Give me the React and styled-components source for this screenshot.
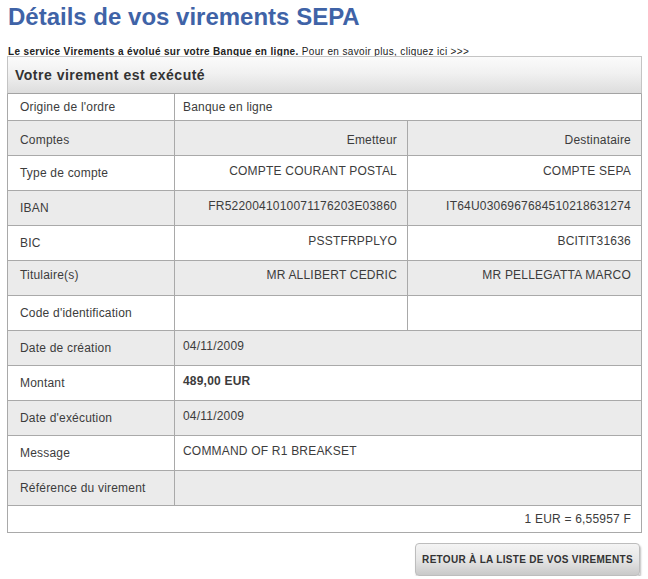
import React from "react";
import styled, { createGlobalStyle } from "styled-components";

const Global = createGlobalStyle`
  html, body { margin: 0; padding: 0; background: #ffffff; }
  body { font-family: "Liberation Sans", Arial, sans-serif; color: #3a3a3a; }
`;

const Page = styled.div`
  width: 648px;
  padding: 0 0 0 7px;
  box-sizing: border-box;
`;

const Title = styled.h1`
  margin: 0;
  padding: 3px 0 0 1px;
  height: 34px;
  box-sizing: border-box;
  font-family: "Liberation Sans", Arial, sans-serif;
  font-size: 24px;
  line-height: 28px;
  font-weight: bold;
  color: #3f63a7;
`;

const Notice = styled.div`
  margin-top: 11px;
  padding-left: 1px;
  height: 11px;
  overflow: hidden;
  font-family: "Liberation Sans", Arial, sans-serif;
  font-size: 10px;
  line-height: 13px;
  letter-spacing: 0.35px;
  color: #222;
  white-space: nowrap;
`;

const NoticeStrong = styled.strong`
  font-weight: bold;
`;

const Panel = styled.div`
  width: 635px;
  box-sizing: border-box;
  border-left: 1px solid #a9a9a9;
  border-right: 1px solid #a9a9a9;
  border-bottom: 1px solid #a9a9a9;
`;

const PanelHeader = styled.div`
  height: 38px;
  box-sizing: border-box;
  margin: 0 -1px;
  border: 1px solid #c4c4c4;
  border-bottom: 1px solid #a3a3a3;
  background: linear-gradient(to bottom, #fbfbfb 0%, #f1f1f1 45%, #dddddd 100%);
  display: flex;
  align-items: center;
  padding-left: 7px;
  font-size: 14px;
  letter-spacing: 0.5px;
  font-weight: bold;
  color: #333;
`;

const Row = styled.div`
  display: grid;
  grid-template-columns: 166px 233px 1fr;
  height: ${(p) => p.$h || 35}px;
  box-sizing: border-box;
  border-bottom: 1px solid #a9a9a9;
  background: ${(p) => (p.$alt ? "#ebebeb" : "#ffffff")};
`;

const Cell = styled.div`
  box-sizing: border-box;
  font-size: 12px;
  line-height: 14px;
  letter-spacing: 0.2px;
  color: #3c3c3c;
  display: flex;
  align-items: ${(p) => (p.$top !== undefined ? "flex-start" : "center")};
  padding-top: ${(p) => (p.$top !== undefined ? p.$top : 0)}px;
  justify-content: ${(p) => (p.$right ? "flex-end" : "flex-start")};
  padding-left: ${(p) => (p.$right ? 0 : p.$label ? 12 : 8)}px;
  padding-right: ${(p) => (p.$right ? 10 : 0)}px;
  border-left: ${(p) => (p.$label ? "none" : "1px solid #a9a9a9")};
  grid-column: ${(p) => p.$span || "auto"};
  font-weight: ${(p) => (p.$bold ? "bold" : "normal")};
  white-space: nowrap;
`;

const FooterRow = styled.div`
  height: 26px;
  display: flex;
  align-items: center;
  justify-content: flex-end;
  padding-right: 10px;
  font-size: 12px;
  letter-spacing: 0.2px;
  color: #3c3c3c;
  background: #fff;
`;

const Actions = styled.div`
  width: 635px;
  display: flex;
  justify-content: flex-end;
  padding-top: 10px;
`;

const BackButton = styled.button`
  width: 225px;
  height: 33px;
  margin-right: 2px;
  border: 1px solid #bdbdbd;
  border-radius: 4px;
  background: linear-gradient(to bottom, #f4f4f4 0%, #e6e6e6 50%, #c9c9c9 100%);
  box-shadow: 1px 2px 2px rgba(0, 0, 0, 0.25);
  font-family: "Liberation Sans", Arial, sans-serif;
  font-size: 10px;
  font-weight: bold;
  letter-spacing: 0.3px;
  color: #333;
  padding: 0;
  cursor: pointer;
`;

const rowsTop = [
  { label: "Type de compte", a: "COMPTE COURANT POSTAL", b: "COMPTE SEPA", alt: false },
  { label: "IBAN", a: "FR5220041010071176203E03860", b: "IT64U0306967684510218631274", alt: true },
  { label: "BIC", a: "PSSTFRPPLYO", b: "BCITIT31636", alt: false },
];

const rowsSingle = [
  { label: "Date de création", v: "04/11/2009", alt: true },
  { label: "Montant", v: "489,00 EUR", bold: true, alt: false },
  { label: "Date d'exécution", v: "04/11/2009", alt: true },
  { label: "Message", v: "COMMAND OF R1 BREAKSET", alt: false },
  { label: "Référence du virement", v: "", alt: true },
];

export default function App() {
  return (
    <>
      <Global />
      <Page>
        <Title>Détails de vos virements SEPA</Title>
        <Notice>
          <NoticeStrong>Le service Virements a évolué sur votre Banque en ligne.</NoticeStrong>{" "}
          Pour en savoir plus, cliquez ici &gt;&gt;&gt;
        </Notice>
        <Panel>
          <PanelHeader>Votre virement est exécuté</PanelHeader>
          <Row $h={27}>
            <Cell $label>Origine de l'ordre</Cell>
            <Cell $span="2 / 4">Banque en ligne</Cell>
          </Row>
          <Row $alt>
            <Cell $label $top={12}>Comptes</Cell>
            <Cell $right $top={12}>Emetteur</Cell>
            <Cell $right $top={12}>Destinataire</Cell>
          </Row>
          {rowsTop.map((r) => (
            <Row key={r.label} $alt={r.alt}>
              <Cell $label>{r.label}</Cell>
              <Cell $right $top={8}>{r.a}</Cell>
              <Cell $right $top={8}>{r.b}</Cell>
            </Row>
          ))}
          <Row $alt>
            <Cell $label $top={7}>Titulaire(s)</Cell>
            <Cell $right $top={7}>MR ALLIBERT CEDRIC</Cell>
            <Cell $right $top={7}>MR PELLEGATTA MARCO</Cell>
          </Row>
          <Row>
            <Cell $label>Code d'identification</Cell>
            <Cell $right $top={8}></Cell>
            <Cell $right $top={8}></Cell>
          </Row>
          {rowsSingle.map((r) => (
            <Row key={r.label} $alt={r.alt}>
              <Cell $label>{r.label}</Cell>
              <Cell $span="2 / 4" $top={8} $bold={r.bold}>{r.v}</Cell>
            </Row>
          ))}
          <FooterRow>1 EUR = 6,55957 F</FooterRow>
        </Panel>
        <Actions>
          <BackButton>RETOUR À LA LISTE DE VOS VIREMENTS</BackButton>
        </Actions>
      </Page>
    </>
  );
}
